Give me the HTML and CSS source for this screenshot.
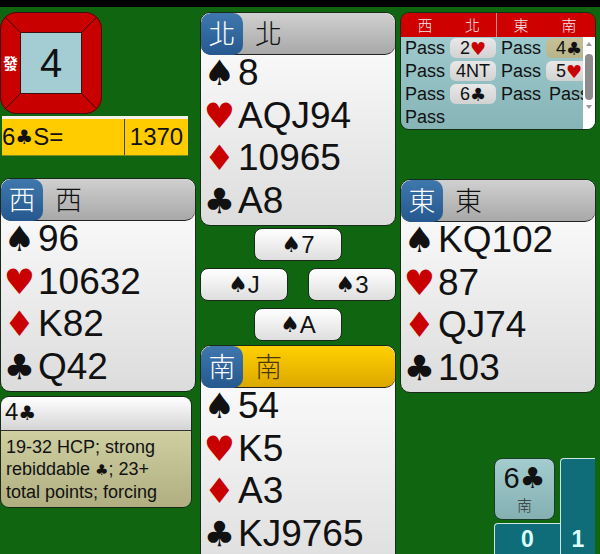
FILE: index.html
```html
<!DOCTYPE html>
<html lang="en">
<head>
  <meta charset="UTF-8">
  <title>Bridge table</title>
  <link rel="stylesheet" href="styles.css">
</head>
<body>
  <div class="topbar"></div>
  <div class="table">

    <div class="column">
      <div class="board">
        <svg class="board-lines" width="102" height="102" viewBox="0 0 102 102">
          <line x1="5" y1="5" x2="21" y2="21"></line>
          <line x1="97" y1="5" x2="81" y2="21"></line>
          <line x1="5" y1="97" x2="21" y2="81"></line>
          <line x1="97" y1="97" x2="81" y2="81"></line>
        </svg>
        <span class="dealer">發</span>
        <div class="board-number">4</div>
      </div>
      <div class="score">
        <div class="contract">6<span class="suit">♣</span>S=</div>
        <div class="points">1370</div>
      </div>
      <div class="hand west">
        <div class="hand-title"><span class="seat">西</span><span class="player">西</span></div>
        <div class="hand-body">
          <div class="suit-row"><span class="suit-icon">♠</span>96</div>
          <div class="suit-row"><span class="suit-icon red">♥</span>10632</div>
          <div class="suit-row"><span class="suit-icon red">♦</span>K82</div>
          <div class="suit-row"><span class="suit-icon">♣</span>Q42</div>
        </div>
      </div>
      <div class="explain">
        <div class="explain-title">4<span class="suit">♣</span></div>
        <div class="explain-body">19-32 HCP; strong rebiddable <span class="suit">♣</span>; 23+ total points; forcing</div>
      </div>
    </div>

    <div class="column">
      <div class="hand">
        <div class="hand-title"><span class="seat">北</span><span class="player">北</span></div>
        <div class="hand-body">
          <div class="suit-row"><span class="suit-icon">♠</span>8</div>
          <div class="suit-row"><span class="suit-icon red">♥</span>AQJ94</div>
          <div class="suit-row"><span class="suit-icon red">♦</span>10965</div>
          <div class="suit-row"><span class="suit-icon">♣</span>A8</div>
        </div>
      </div>
      <div class="tricks">
        <div class="trick-row"><div class="card"><span class="suit">♠</span>7</div></div>
        <div class="trick-row wide"><div class="card"><span class="suit">♠</span>J</div><div class="card"><span class="suit">♠</span>3</div></div>
        <div class="trick-row"><div class="card"><span class="suit">♠</span>A</div></div>
      </div>
      <div class="hand south">
        <div class="hand-title active"><span class="seat">南</span><span class="player">南</span></div>
        <div class="hand-body">
          <div class="suit-row"><span class="suit-icon">♠</span>54</div>
          <div class="suit-row"><span class="suit-icon red">♥</span>K5</div>
          <div class="suit-row"><span class="suit-icon red">♦</span>A3</div>
          <div class="suit-row"><span class="suit-icon">♣</span>KJ9765</div>
        </div>
      </div>
    </div>

    <div class="column">
      <div class="auction">
        <div class="auction-head"><span>西</span><span class="split">北</span><span>東</span><span>南</span></div>
        <div class="auction-main">
          <div class="auction-grid">
            <span class="call">Pass</span><span class="bid">2<span class="red">♥</span></span><span class="call">Pass</span><span class="bid alert">4<span class="suit">♣</span></span>
            <span class="call">Pass</span><span class="bid">4NT</span><span class="call">Pass</span><span class="bid">5<span class="red">♥</span></span>
            <span class="call">Pass</span><span class="bid">6<span class="suit">♣</span></span><span class="call">Pass</span><span class="call">Pass</span>
            <span class="call">Pass</span>
          </div>
          <div class="scrollbar">
            <span class="arrow up"></span>
            <span class="thumb"></span>
            <span class="arrow down"></span>
          </div>
        </div>
      </div>
      <div class="hand east">
        <div class="hand-title"><span class="seat">東</span><span class="player">東</span></div>
        <div class="hand-body">
          <div class="suit-row"><span class="suit-icon">♠</span>KQ102</div>
          <div class="suit-row"><span class="suit-icon red">♥</span>87</div>
          <div class="suit-row"><span class="suit-icon red">♦</span>QJ74</div>
          <div class="suit-row"><span class="suit-icon">♣</span>103</div>
        </div>
      </div>
      <div class="result">
        <div class="result-left">
          <div class="final-bid">
            <div class="final-contract">6<span class="suit">♣</span></div>
            <div class="final-seat">南</div>
          </div>
          <div class="count ours">0</div>
        </div>
        <div class="count theirs">1</div>
      </div>
    </div>

  </div>
</body>
</html>
```

FILE: styles.css
```css
* {
  margin: 0;
  padding: 0;
  box-sizing: border-box;
}

html, body {
  height: 554px;
  overflow: hidden;
}

body {
  font-family: "Liberation Sans", Arial, "Noto Sans CJK TC", sans-serif;
  background-color: #106510;
  color: #111;
}

.topbar {
  height: 7px;
  background-color: #000;
}

.table {
  display: grid;
  grid-template-columns: 196px 196px 196px;
  gap: 4px;
  padding-top: 5px;
  height: 547px;
  overflow: hidden;
}

.column {
  display: flex;
  flex-direction: column;
  min-height: 0;
}

.suit {
  font-family: "DejaVu Sans", sans-serif;
}

.red {
  font-family: "DejaVu Sans", sans-serif;
  color: #c80000;
}

/* board */
.board {
  position: relative;
  width: 102px;
  height: 102px;
  border: 20px solid #c80000;
  border-radius: 17px;
  outline: 1px solid #3a1010;
  outline-offset: -1px;
  display: flex;
}

.board-lines {
  position: absolute;
  top: -20px;
  left: -20px;
}

.board-lines line {
  stroke: #3a0808;
  stroke-width: 1;
}

.dealer {
  position: absolute;
  left: -17px;
  top: 21px;
  width: 16px;
  font-size: 15px;
  line-height: 20px;
  font-weight: bold;
  color: #fff;
  font-family: "Noto Sans CJK TC", sans-serif;
}

.board-number {
  flex: 1;
  background-color: #a3cdd2;
  border: 1px solid #3a1010;
  display: flex;
  align-items: center;
  justify-content: center;
  font-size: 40px;
}

/* score */
.score {
  display: flex;
  width: 186px;
  height: 39px;
  margin: 2px 0 0 2px;
  background-color: #ffcc00;
  border-top: 3px solid #f2f2e8;
  font-size: 24px;
  box-shadow: 0 1px 0 #7a8a20;
}

.score > div {
  display: flex;
  align-items: center;
  height: 36px;
}

.contract {
  width: 123px;
  border-right: 1px solid #444;
}

.contract .suit {
  font-size: 20px;
}

.points {
  flex: 1;
  justify-content: center;
}

/* hands */
.hand {
  width: 196px;
  height: 214px;
  background: linear-gradient(#fff, #dcdcdc);
  border: 1px solid #1a2a1a;
  border-radius: 10px;
  overflow: hidden;
  flex-shrink: 0;
}

.west {
  margin-top: 23px;
}

.east {
  margin-top: 49px;
}

.south {
  height: 240px;
}

.hand-title {
  display: flex;
  align-items: center;
  height: 42px;
  background: linear-gradient(#d0d0d0, #a8a8a8);
  border-bottom: 1px solid #222;
  border-radius: 10px;
  font-family: "Noto Sans CJK TC", sans-serif;
  font-size: 27px;
  font-weight: 300;
}

.hand-title.active {
  background: linear-gradient(#ffd000, #dca800);
  color: #4a3800;
}

.seat {
  display: flex;
  align-items: center;
  justify-content: center;
  width: 42px;
  height: 42px;
  padding-bottom: 3px;
  background: linear-gradient(#3f78ad, #25588f);
  color: #fff;
  border-radius: 10px;
  flex-shrink: 0;
}

.player {
  margin-left: 12px;
  padding-bottom: 3px;
}

.hand-body {
  margin-top: -3px;
}

.suit-row {
  display: flex;
  align-items: center;
  height: 42.5px;
  font-size: 37px;
  white-space: nowrap;
}

.suit-icon {
  width: 37px;
  text-align: center;
  font-family: "DejaVu Sans", sans-serif;
  font-size: 35px;
  flex-shrink: 0;
}

.suit-icon.red {
  color: #c80000;
}

/* cards on the table */
.tricks {
  display: flex;
  flex-direction: column;
  gap: 7px;
  padding-top: 2px;
  height: 119px;
  flex-shrink: 0;
}

.trick-row {
  display: flex;
  justify-content: center;
}

.trick-row.wide {
  justify-content: space-between;
}

.card {
  width: 88px;
  height: 33px;
  background: linear-gradient(#fff, #dedede);
  border: 1px solid #1a2a1a;
  border-radius: 8px;
  display: flex;
  align-items: center;
  justify-content: center;
  font-size: 24px;
}

.card .suit {
  font-size: 22px;
}

/* auction */
.auction {
  height: 118px;
  border: 1px solid #143014;
  border-radius: 9px;
  overflow: hidden;
  flex-shrink: 0;
}

.auction-head {
  display: grid;
  grid-template-columns: 48px 48px 48px 48px;
  height: 24px;
  background-color: #cf0000;
  color: #f5e8e8;
  font-family: "Noto Sans CJK TC", sans-serif;
  font-size: 15px;
  font-weight: 300;
  line-height: 23px;
  text-align: center;
}

.auction-head .split {
  border-right: 1px solid #e88;
}

.auction-main {
  display: flex;
  height: 92px;
  background: linear-gradient(#9fcacd, #86b4b7);
}

.auction-grid {
  flex: 1;
  min-width: 0;
  display: grid;
  grid-template-columns: repeat(4, 48px);
  grid-auto-rows: 23px;
  overflow: hidden;
  font-size: 18px;
}

.auction-grid > span {
  display: flex;
  align-items: center;
  white-space: nowrap;
}

.call {
  padding-left: 4px;
}

.bid {
  margin: 1px 1px 2px 1px;
  justify-content: center;
  background: linear-gradient(#e8e8e8, #d2d2d2);
  border-radius: 6px;
}

.bid.alert {
  background: linear-gradient(#c8c098, #b8b488);
}

.scrollbar {
  width: 12px;
  flex-shrink: 0;
  background-color: #fff;
  display: flex;
  flex-direction: column;
  align-items: center;
  padding-top: 5px;
}

.thumb {
  width: 8px;
  height: 46px;
  margin: 8px 0 5px;
  background-color: #8c8c8c;
  border-radius: 4px;
}

.arrow {
  width: 0;
  height: 0;
  border-left: 3px solid transparent;
  border-right: 3px solid transparent;
}

.arrow.up {
  border-bottom: 4px solid #999;
}

.arrow.down {
  border-top: 4px solid #999;
}

/* bid explanation */
.explain {
  width: 192px;
  height: 112px;
  margin-top: 4px;
  border: 1px solid #1a2a1a;
  border-radius: 9px;
  overflow: hidden;
  flex-shrink: 0;
}

.explain-title {
  height: 34px;
  padding-left: 4px;
  background: linear-gradient(#fff, #d4d4d4);
  border-bottom: 1px solid #333;
  font-size: 24px;
  line-height: 30px;
}

.explain-title .suit {
  font-size: 20px;
}

.explain-body {
  height: 77px;
  padding: 5px 14px 0 5px;
  background: linear-gradient(#cfcfa2, #b0ae80);
  font-size: 18px;
  line-height: 22px;
}

.explain-body .suit {
  font-size: 15px;
}

/* bottom right widget */
.result {
  display: flex;
  flex: 1;
  margin-top: 65px;
  padding-left: 94px;
  align-items: flex-start;
}

.result-left {
  width: 66px;
}

.final-bid {
  width: 61px;
  height: 62px;
  background: linear-gradient(#a4cccf, #84b0b2);
  border: 1px solid #1a3a2a;
  border-radius: 8px;
  text-align: center;
}

.final-contract {
  font-size: 29px;
  line-height: 34px;
  margin-top: 2px;
}

.final-seat {
  font-family: "Noto Sans CJK TC", sans-serif;
  font-size: 15px;
  font-weight: 300;
  line-height: 20px;
  color: #333;
}

.count {
  background-color: #0e6d78;
  border-top: 1px solid #cfe6df;
  border-left: 1px solid #cfe6df;
  border-radius: 4px 0 0 0;
  color: #dff;
  font-size: 23px;
  font-weight: bold;
  text-align: center;
}

.ours {
  height: 40px;
  margin-top: 3px;
  line-height: 30px;
}

.theirs {
  width: 35px;
  height: 100px;
  padding-top: 65px;
  line-height: 30px;
}
```
